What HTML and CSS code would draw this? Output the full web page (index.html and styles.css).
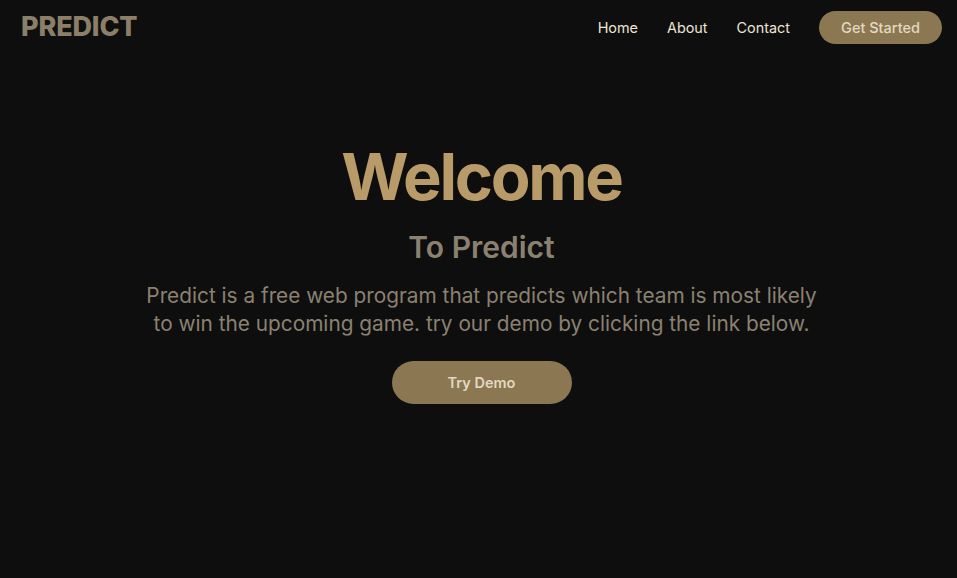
FILE: index.html
```html
<!DOCTYPE html>
<html lang="en">
<head>
<meta charset="utf-8">
<title>Predict</title>
<link rel="stylesheet" href="styles.css">
</head>
<body>
<header class="header">
  <div class="logo">PREDICT</div>
  <nav class="nav">
    <a href="#" class="nav-link">Home</a>
    <a href="#" class="nav-link">About</a>
    <a href="#" class="nav-link">Contact</a>
    <a href="#" class="btn-start">Get Started</a>
  </nav>
</header>
<main class="hero">
  <h1 class="title">Welcome</h1>
  <h2 class="subtitle">To Predict</h2>
  <p class="desc">Predict is a free web program that predicts which team is most likely to win the upcoming game. try our demo by clicking the link below.</p>
  <a href="#" class="btn-demo">Try Demo</a>
</main>
</body>
</html>
```
FILE: styles.css
```css
* { box-sizing: border-box; }
html, body { margin: 0; padding: 0; }
body {
  background: #0e0e0e;
  font-family: Inter, "Noto Sans", sans-serif;
  height: 578px;
  overflow: hidden;
}
.header {
  display: flex;
  justify-content: space-between;
  align-items: center;
  padding: 11px 15px 0 21px;
  height: 44px;
}
.logo {
  font-size: 27px;
  font-weight: 800;
  color: #8c7f69;
  letter-spacing: -0.15px;
  line-height: 1;
  margin-top: -2px;
}
.nav {
  display: flex;
  align-items: center;
}
.nav-link {
  color: #ece4d4;
  text-decoration: none;
  font-size: 14.4px;
  margin-right: 29px;
}
.btn-start {
  display: flex;
  align-items: center;
  justify-content: center;
  width: 123px;
  height: 33px;
  border-radius: 17px;
  background: #8b7751;
  color: #e3d8c2;
  text-decoration: none;
  font-size: 14.5px;
  font-weight: 500;
}
.hero {
  display: flex;
  flex-direction: column;
  align-items: center;
  text-align: center;
  padding-top: 100px;
  padding-left: 6px;
}
.title {
  margin: 0;
  font-size: 65px;
  font-weight: 700;
  color: #b89b68;
  letter-spacing: -2.3px;
  line-height: 1;
}
.subtitle {
  margin: 23px 0 0;
  font-size: 30px;
  font-weight: 600;
  color: #8b8171;
  line-height: 1;
}
.desc {
  margin: 20px 0 0;
  max-width: 690px;
  font-size: 20.8px;
  line-height: 28px;
  color: #8b8171;
}
.btn-demo {
  margin-top: 23px;
  display: flex;
  align-items: center;
  justify-content: center;
  width: 180px;
  height: 43px;
  border-radius: 22px;
  background: #8b7751;
  color: #e3d8c2;
  text-decoration: none;
  font-size: 14.5px;
  font-weight: 600;
}
```
